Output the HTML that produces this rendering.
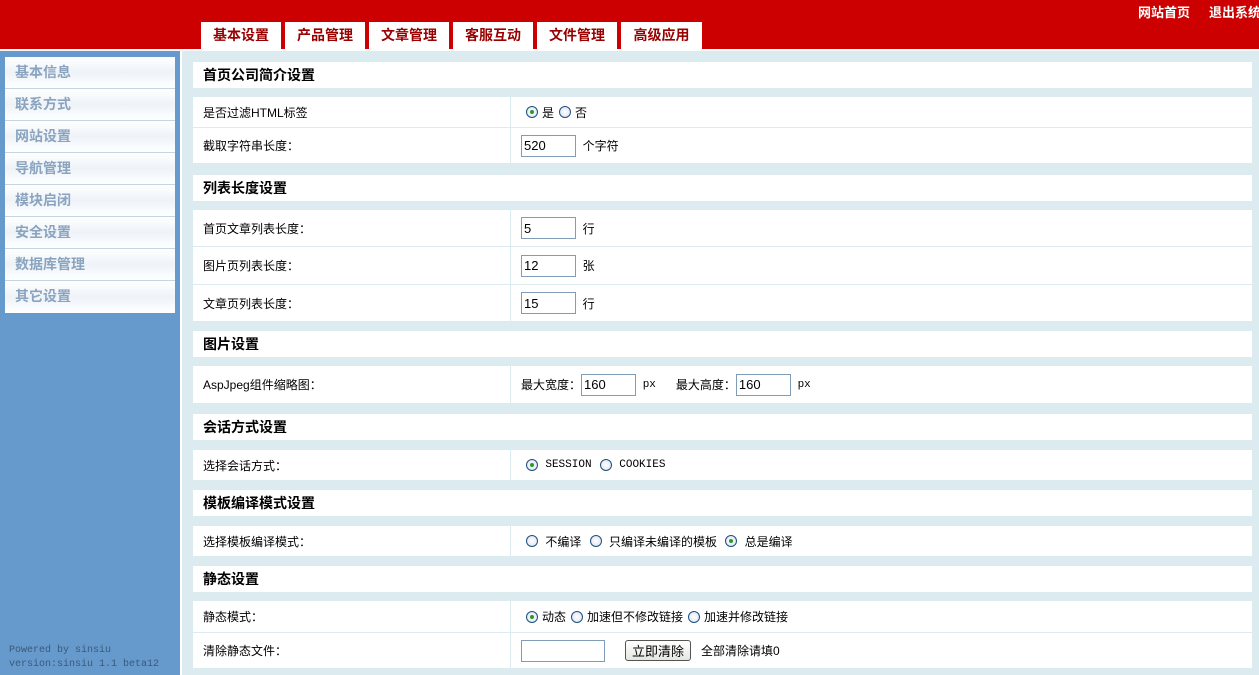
<!DOCTYPE html>
<html><head><meta charset="utf-8"><style>
*{margin:0;padding:0;box-sizing:border-box}
body{width:1259px;height:675px;overflow:hidden;background:#fff;font-family:"Liberation Sans","Noto Sans CJK SC","WenQuanYi Zen Hei",sans-serif;font-size:12px;color:#000;position:relative}
.a{position:absolute}
#hd{left:0;top:0;width:1259px;height:49px;background:#cc0000}
.tab{top:22px;height:27px;background:#fff;color:#990000;font-weight:bold;font-size:14px;line-height:27px;text-align:center}
.tl{top:2px;color:#fff;font-weight:bold;font-size:13px}
#sb{left:0;top:51px;width:180px;height:624px;background:#6699cc}
#menu{left:5px;top:57px;width:170px;background:#fff}
.mi{height:32px;line-height:31px;border-bottom:1px solid #c5d5e5;color:#8aa4c0;font-weight:bold;font-size:14px;padding-left:10px;background:linear-gradient(#fff,#eef3f8 50%,#fff)}
#main{left:182px;top:51px;width:1077px;height:624px;background:#dcebf0}
.h{left:193px;width:1059px;height:26px;background:#fff;font-weight:bold;font-size:14px;line-height:26px;padding-left:10px}
.r{left:193px;width:1059px;background:#fff;border-bottom:1px solid #dcebf0}
.r .l{position:absolute;left:10px;top:0;height:100%;display:flex;align-items:center}
.r .v{position:absolute;left:317px;top:0;right:0;height:100%;border-left:1px solid #dcebf0;display:flex;align-items:center;padding-left:10px;white-space:nowrap}
input.t{height:22px;border:1px solid #7f9db9;font-size:13px;padding-left:2px;font-family:"Liberation Sans",sans-serif}
.rd{display:inline-block;width:12px;height:12px;border:1px solid #1c5180;border-radius:50%;background:radial-gradient(#fff,#dde);margin:0 4px 0 5px;position:relative;vertical-align:middle}
.rd.on::after{content:"";position:absolute;left:3px;top:3px;width:4px;height:4px;border-radius:50%;background:#2a9a2a}
.mono{font-family:"Liberation Mono",monospace;font-size:11px}
.btn{border:1px solid #555;border-radius:3px;background:linear-gradient(#fff,#e6e6e0);padding:1px 6px;font-size:13px;height:21px;display:inline-flex;align-items:center}
</style></head><body>
<div id="hd" class="a"></div>
<div class="a tab" style="left:201px;width:80px">基本设置</div>
<div class="a tab" style="left:285px;width:80px">产品管理</div>
<div class="a tab" style="left:369px;width:80px">文章管理</div>
<div class="a tab" style="left:453px;width:80px">客服互动</div>
<div class="a tab" style="left:537px;width:80px">文件管理</div>
<div class="a tab" style="left:621px;width:81px">高级应用</div>
<div class="a tl" style="left:1138px">网站首页</div>
<div class="a tl" style="left:1209px;white-space:nowrap">退出系统</div>
<div id="sb" class="a"></div>
<div id="menu" class="a">
<div class="mi">基本信息</div><div class="mi">联系方式</div><div class="mi">网站设置</div><div class="mi">导航管理</div><div class="mi">模块启闭</div><div class="mi">安全设置</div><div class="mi">数据库管理</div><div class="mi" style="border-bottom:0">其它设置</div>
</div>
<div class="a mono" style="left:9px;top:644px;color:#3a5a7a;font-size:10px;line-height:14px">Powered by sinsiu<br>version:sinsiu 1.1 beta12</div>
<div id="main" class="a"></div>

<div class="a h" style="top:62px">首页公司简介设置</div>
<div class="a r" style="top:97px;height:31px"><div class="l">是否过滤HTML标签</div><div class="v"><span class="rd on"></span>是 <span class="rd"></span>否</div></div>
<div class="a r" style="top:128px;height:36px"><div class="l">截取字符串长度：</div><div class="v"><input class="t" style="width:55px" value="520">&nbsp;&nbsp;个字符</div></div>

<div class="a h" style="top:175px">列表长度设置</div>
<div class="a r" style="top:210px;height:37px"><div class="l">首页文章列表长度：</div><div class="v"><input class="t" style="width:55px" value="5">&nbsp;&nbsp;行</div></div>
<div class="a r" style="top:247px;height:38px"><div class="l">图片页列表长度：</div><div class="v"><input class="t" style="width:55px" value="12">&nbsp;&nbsp;张</div></div>
<div class="a r" style="top:285px;height:37px"><div class="l">文章页列表长度：</div><div class="v"><input class="t" style="width:55px" value="15">&nbsp;&nbsp;行</div></div>

<div class="a h" style="top:331px">图片设置</div>
<div class="a r" style="top:366px;height:38px"><div class="l">AspJpeg组件缩略图：</div><div class="v">最大宽度：<input class="t" style="width:55px" value="160">&nbsp;&nbsp;<span class="mono">px</span>&nbsp;&nbsp;&nbsp;&nbsp;&nbsp;&nbsp;最大高度：<input class="t" style="width:55px" value="160">&nbsp;&nbsp;<span class="mono">px</span></div></div>

<div class="a h" style="top:414px">会话方式设置</div>
<div class="a r" style="top:450px;height:31px"><div class="l">选择会话方式：</div><div class="v"><span class="rd on"></span>&nbsp;<span class="mono">SESSION</span>&nbsp;<span class="rd"></span>&nbsp;<span class="mono">COOKIES</span></div></div>

<div class="a h" style="top:490px">模板编译模式设置</div>
<div class="a r" style="top:526px;height:31px"><div class="l">选择模板编译模式：</div><div class="v"><span class="rd"></span>&nbsp;不编译&nbsp;<span class="rd"></span>&nbsp;只编译未编译的模板&nbsp;<span class="rd on"></span>&nbsp;总是编译</div></div>

<div class="a h" style="top:566px">静态设置</div>
<div class="a r" style="top:601px;height:32px"><div class="l">静态模式：</div><div class="v"><span class="rd on"></span>动态 <span class="rd"></span>加速但不修改链接 <span class="rd"></span>加速并修改链接</div></div>
<div class="a r" style="top:633px;height:36px"><div class="l">清除静态文件：</div><div class="v"><input class="t" style="width:84px" value="">&nbsp;&nbsp;&nbsp;&nbsp;&nbsp;&nbsp;<span class="btn">立即清除</span>&nbsp;&nbsp;&nbsp;全部清除请填0</div></div>
</body></html>
